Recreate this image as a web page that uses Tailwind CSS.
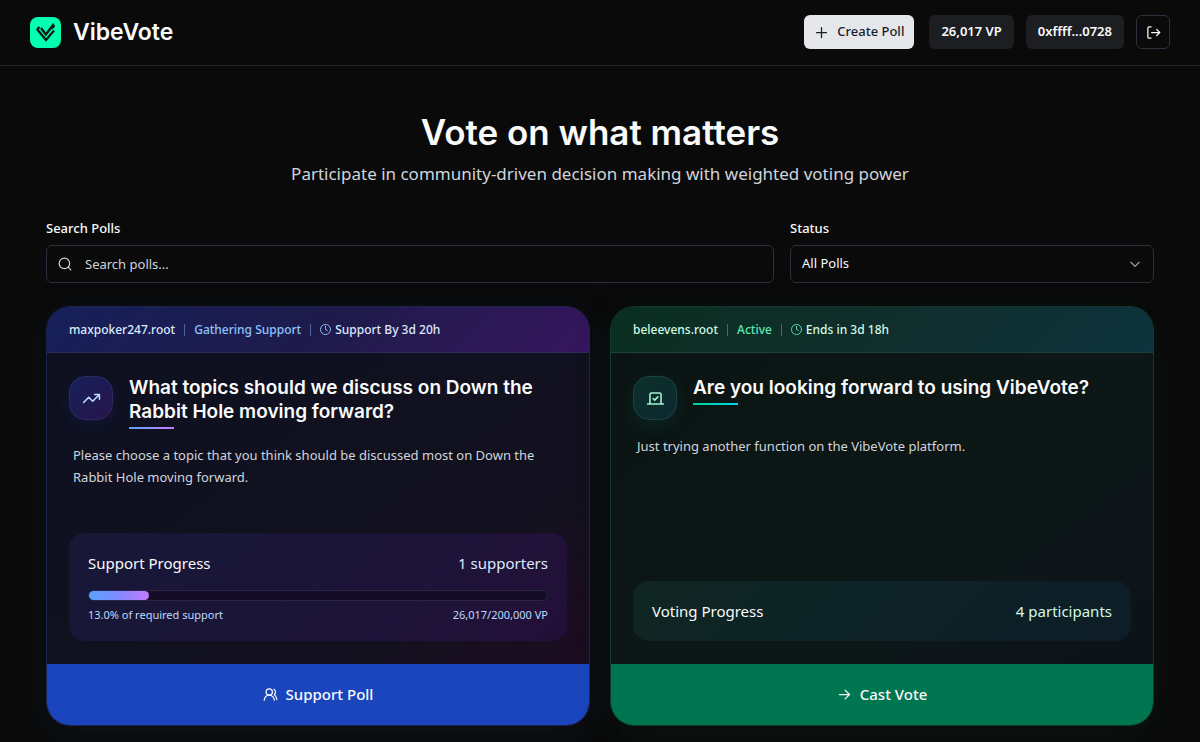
<!DOCTYPE html>
<html lang="en">
<head>
    <meta charset="UTF-8">
    <meta name="viewport" content="width=device-width, initial-scale=1.0">
    <title>VibeVote</title>
    <script src="https://cdn.jsdelivr.net/npm/@tailwindcss/browser@4"></script>
</head>
<body class="min-h-screen bg-[#0a0a0a] font-['Noto_Sans',sans-serif] text-gray-50">
    <header class="flex items-center justify-between border-b border-[#222326] px-[30px] pt-[15px] pb-4">
        <a href="#" class="flex items-center gap-3">
            <svg class="size-[31px]" viewBox="0 0 31 31" fill="none" aria-hidden="true">
                <rect width="31" height="31" rx="8" fill="#00ffb0"/>
                <path d="M9.500 10 7.300 12.500 16 23 24 13.500" stroke="#0a1a14" stroke-width="2.200"/>
                <path d="M11 11 15.800 17.500 23.500 7.500" stroke="#0a1a14" stroke-width="2.400"/>
                <path d="M23 6.500 24.200 9.500 21.500 12" stroke="#0a1a14" stroke-width="1.500"/>
            </svg>
            <span class="font-[Inter] text-[23px] leading-8 font-semibold">VibeVote</span>
        </a>
        <div class="flex items-center gap-3 text-[13px] font-medium">
            <button class="mr-[3px] flex h-[34px] items-center gap-2 rounded-md bg-gray-200 px-[10px] text-[#1b1c2b]">
                <svg class="size-[15px]" viewBox="0 0 24 24" fill="none" stroke="currentColor" stroke-width="2" stroke-linecap="round" aria-hidden="true"><path d="M4 12h16M12 4v16"/></svg>
                Create Poll
            </button>
            <div class="flex h-[34px] items-center rounded-md bg-[#1d1e22] px-3 text-[13px] font-semibold">26,017 VP</div>
            <div class="flex h-[34px] items-center rounded-md bg-[#1d1e22] px-3 text-[13px] font-semibold">0xffff...0728</div>
            <button aria-label="Log out" class="flex size-[34px] items-center justify-center rounded-md border border-[#2e2e3e]">
                <svg class="size-[15px]" viewBox="0 0 24 24" fill="none" stroke="currentColor" stroke-width="2" stroke-linecap="round" stroke-linejoin="round" aria-hidden="true"><path d="M8 21H5a2 2 0 0 1-2-2V5a2 2 0 0 1 2-2h3M17 17l5-5-5-5M22 12H9"/></svg>
            </button>
        </div>
    </header>

    <main class="px-[46px] pt-[46px] pb-4">
        <div class="text-center">
            <h1 class="font-[Inter] text-[35px] leading-10 font-semibold">Vote on what matters</h1>
            <p class="mt-2 text-[17px] leading-[28px] text-gray-300">Participate in community-driven decision making with weighted voting power</p>
        </div>

        <form class="mt-[30px] grid grid-cols-[2fr_1fr] gap-4 text-[13px]">
            <div>
                <label for="search" class="block leading-5 font-medium">Search Polls</label>
                <div class="relative mt-[7px]">
                    <svg class="absolute top-3 left-3 size-[14px] text-gray-300" viewBox="0 0 24 24" fill="none" stroke="currentColor" stroke-width="2" stroke-linecap="round" aria-hidden="true"><circle cx="11" cy="11" r="9"/><path d="m22 22-4.600-4.600"/></svg>
                    <input id="search" type="text" placeholder="Search polls..." class="block h-[38px] w-full rounded-md border border-[#2e2e3e] bg-transparent pr-3 pl-[38px] placeholder:text-gray-300">
                </div>
            </div>
            <div>
                <label for="status" class="block leading-5 font-medium">Status</label>
                <div class="relative mt-[7px]">
                    <select id="status" class="block h-[38px] w-full appearance-none rounded-md border border-[#2e2e3e] bg-[#0a0a0a] px-[11px]">
                        <option>All Polls</option>
                        <option>Gathering Support</option>
                        <option>Active</option>
                    </select>
                    <svg class="pointer-events-none absolute top-3 right-3 size-[14px] text-gray-400" viewBox="0 0 24 24" fill="none" stroke="currentColor" stroke-width="2" stroke-linecap="round" stroke-linejoin="round" aria-hidden="true"><path d="m5 9 7 7 7-7"/></svg>
                </div>
            </div>
        </form>

        <div class="mt-[23px] grid grid-cols-2 gap-5">
            <!-- Gathering support -->
            <article class="flex flex-col overflow-hidden rounded-3xl border border-[#1b2450] bg-linear-to-br from-[#0d1020] via-[#13111f] via-70% to-[#1f0a22] shadow-[0_8px_40px_rgba(30,60,110,0.15)]">
                <div class="flex h-[46px] items-center gap-[9px] border-b border-[#2d2a5c] bg-linear-135 from-[#16205a] via-[#1e1b4b] to-[#36155e] px-[22px] text-[12px] font-medium text-blue-100">
                    <span>maxpoker247.root</span>
                    <span class="h-3 w-px bg-[#4e60a0]"></span>
                    <span class="text-blue-300">Gathering Support</span>
                    <span class="h-3 w-px bg-[#4e60a0]"></span>
                    <span class="flex items-center gap-1">
                        <svg class="size-[11px] text-blue-300" viewBox="0 0 24 24" fill="none" stroke="currentColor" stroke-width="2" stroke-linecap="round" stroke-linejoin="round" aria-hidden="true"><circle cx="12" cy="12" r="11"/><path d="M12 5v7l4 2"/></svg>
                        Support By 3d 20h
                    </span>
                </div>
                <div class="flex flex-1 flex-col px-[22px] py-[23px]">
                    <div class="flex gap-4">
                        <div class="flex size-[44px] shrink-0 items-center justify-center rounded-2xl border border-[#2c2c5c] bg-linear-to-br from-[#16205a] to-[#26144c] shadow-[0_6px_16px_rgba(30,64,175,0.15)]">
                            <svg class="size-[19px] text-blue-200" viewBox="0 0 24 24" fill="none" stroke="currentColor" stroke-width="2" stroke-linecap="round" stroke-linejoin="round" aria-hidden="true"><path d="M16 7h6v6M22 7l-8.500 8.500-5-5L2 17"/></svg>
                        </div>
                        <div>
                            <h2 class="font-[Inter] text-[19px] leading-6 font-semibold">What topics should we discuss on Down the Rabbit Hole moving forward?</h2>
                            <div class="mt-[3px] h-[2px] w-[45px] bg-linear-to-r from-blue-400 to-purple-400"></div>
                        </div>
                    </div>
                    <p class="mt-[15px] mb-[23px] min-h-[66px] px-1 text-[13px] leading-[22px] text-gray-300">Please choose a topic that you think should be discussed most on Down the Rabbit Hole moving forward.</p>
                    <div class="mt-auto rounded-2xl bg-linear-135 from-[#171736] via-[#1b1538] to-[#230f38] px-[19px] py-[18px]">
                        <div class="flex justify-between text-[15px] leading-6">
                            <span>Support Progress</span>
                            <span class="text-blue-100">1 supporters</span>
                        </div>
                        <div class="mt-[15px] h-[11px] rounded-full border border-[#2a2547] bg-[#150d26]" role="progressbar" aria-label="Support progress" aria-valuenow="13" aria-valuemin="0" aria-valuemax="100">
                            <div class="h-full rounded-full bg-linear-to-r from-[#54a2ff] via-[#8088ff] to-[#c27aff]" style="width: 13%"></div>
                        </div>
                        <div class="mt-[5px] flex justify-between text-[11px] leading-[17px] text-blue-200">
                            <span>13.0% of required support</span>
                            <span>26,017/200,000 VP</span>
                        </div>
                    </div>
                </div>
                <button class="flex h-[61px] items-center justify-center gap-2 bg-[#1a45bc] text-[15px] font-medium">
                    <svg class="size-[15px]" viewBox="0 0 24 24" fill="none" stroke="currentColor" stroke-width="2" stroke-linecap="round" stroke-linejoin="round" aria-hidden="true"><path d="M18 21a8 8 0 0 0-16 0"/><circle cx="10" cy="8" r="5"/><path d="M22 20c0-3.370-2-6.500-4-8a5 5 0 0 0-.45-8.300"/></svg>
                    Support Poll
                </button>
            </article>

            <!-- Active -->
            <article class="flex flex-col overflow-hidden rounded-3xl border border-[#10382f] bg-linear-to-br from-[#0a1513] via-[#0d1716] to-[#0c131a] shadow-[0_8px_40px_rgba(16,90,70,0.12)]">
                <div class="flex h-[46px] items-center gap-[9px] border-b border-[#1b4439] bg-linear-135 from-[#0a2f20] via-[#102e2c] to-[#0d333d] px-[22px] text-[12px] font-medium text-emerald-100">
                    <span>beleevens.root</span>
                    <span class="h-3 w-px bg-[#2c7a5c]"></span>
                    <span class="text-emerald-300">Active</span>
                    <span class="h-3 w-px bg-[#2c7a5c]"></span>
                    <span class="flex items-center gap-1">
                        <svg class="size-[11px] text-emerald-300" viewBox="0 0 24 24" fill="none" stroke="currentColor" stroke-width="2" stroke-linecap="round" stroke-linejoin="round" aria-hidden="true"><circle cx="12" cy="12" r="11"/><path d="M12 5v7l4 2"/></svg>
                        Ends in 3d 18h
                    </span>
                </div>
                <div class="flex flex-1 flex-col px-[22px] py-[23px]">
                    <div class="flex gap-4">
                        <div class="flex size-[44px] shrink-0 items-center justify-center rounded-2xl border border-[#1c443f] bg-linear-to-br from-[#0b3028] to-[#0c2932] shadow-[0_6px_16px_rgba(16,120,90,0.15)]">
                            <svg class="size-[19px] text-emerald-200" viewBox="0 0 24 24" fill="none" stroke="currentColor" stroke-width="2" stroke-linecap="round" stroke-linejoin="round" aria-hidden="true"><path d="m9 12 2 2 4-4"/><path d="M5 7c0-1.100.9-2 2-2h10a2 2 0 0 1 2 2v12H5V7ZM22 19H2"/></svg>
                        </div>
                        <div>
                            <h2 class="font-[Inter] text-[19px] leading-6 font-semibold">Are you looking forward to using VibeVote?</h2>
                            <div class="mt-[3px] h-[2px] w-[45px] bg-linear-to-r from-emerald-400 to-cyan-400"></div>
                        </div>
                    </div>
                    <p class="mt-[15px] mb-[23px] min-h-[66px] px-1 text-[13px] leading-[22px] text-gray-300">Just trying another function on the VibeVote platform.</p>
                    <div class="mt-auto flex justify-between rounded-2xl bg-linear-135 from-[#102622] via-[#0d2226] to-[#0e1d27] px-[19px] py-[18px] text-[15px] leading-6">
                        <span>Voting Progress</span>
                        <span class="text-emerald-100">4 participants</span>
                    </div>
                </div>
                <button class="flex h-[61px] items-center justify-center gap-2 bg-[#007650] text-[15px] font-medium">
                    <svg class="size-[15px]" viewBox="0 0 24 24" fill="none" stroke="currentColor" stroke-width="2" stroke-linecap="round" stroke-linejoin="round" aria-hidden="true"><path d="M4 12h16M13 5l7 7-7 7"/></svg>
                    Cast Vote
                </button>
            </article>
        </div>
    </main>
</body>
</html>
